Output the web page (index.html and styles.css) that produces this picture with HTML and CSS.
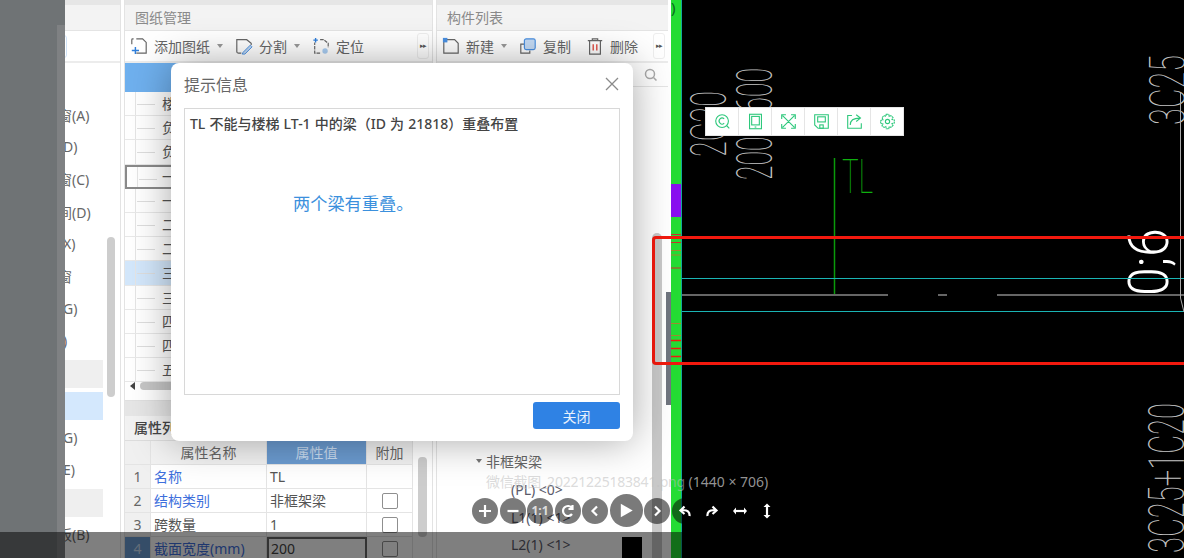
FILE: index.html
```html
<!DOCTYPE html>
<html lang="zh">
<head>
<meta charset="utf-8">
<title>提示信息</title>
<link rel="stylesheet" href="styles.css">
</head>
<body>
<div class="stage">
  <div class="gutter"><div class="gutter-strip"></div></div>

  <section class="pane pane-left">
    <div class="pane-top"></div>
    <div class="pane-head"></div>
    <div class="pane-tools"><span class="search-edge"></span></div>
    <div class="nav-list">
      <div class="nav-item">窗(A)</div>
      <div class="nav-item"><span class="clip">D)</span></div>
      <div class="nav-item">窗(C)</div>
      <div class="nav-item">间(D)</div>
      <div class="nav-item"><span class="clip">X)</span></div>
      <div class="nav-item">窗</div>
      <div class="nav-item"><span class="clip">G)</span></div>
      <div class="nav-item"><span class="clip">)</span></div>
      <div class="nav-item is-muted"></div>
      <div class="nav-item is-active"></div>
      <div class="nav-item"><span class="clip">G)</span></div>
      <div class="nav-item"><span class="clip">E)</span></div>
      <div class="nav-item is-muted"></div>
      <div class="nav-item">板(B)</div>
    </div>
    <div class="thumb thumb-left"></div>
  </section>
  <div class="split"></div>

  <div class="column">
    <section class="pane pane-drawings">
      <div class="pane-top"></div>
      <div class="pane-head">图纸管理</div>
      <div class="pane-tools">
        <span class="tool">
          <svg class="tool-icon" viewBox="0 0 20 20"><path d="M7 2h7l4 4v12H7M2 8V3a1 1 0 0 1 1-1h1" fill="none" stroke="#666" stroke-width="1.3"/><path d="M2 15h8M6 11v8" stroke="#2f7fdc" stroke-width="1.6"/></svg>添加图纸<i class="caret"></i>
        </span>
        <span class="tool">
          <svg class="tool-icon" viewBox="0 0 20 20"><path d="M7 18H4a2 2 0 0 1-2-2V3h11l5 4v2" fill="none" stroke="#666" stroke-width="1.3"/><path d="M9 17l8-8 2 2-8 8H8z" fill="#bcd6f3" stroke="#4a90e2"/></svg>分割<i class="caret"></i>
        </span>
        <span class="tool">
          <svg class="tool-icon" viewBox="0 0 20 20"><path d="M9 3h4l5 4v5M9 18H3V6" fill="none" stroke="#666" stroke-width="1.3" stroke-dasharray="4 1"/><path d="M4 1v5M1.500 3.500h5" stroke="#2f7fdc" stroke-width="1.5"/><circle cx="14.500" cy="15.500" r="3" fill="#a9cdf2"/></svg>定位
        </span>
        <span class="more">▸▸</span>
      </div>
      <div class="tree-head"></div>
      <div class="tree">
        <div class="tree-row">楼</div>
        <div class="tree-row">负</div>
        <div class="tree-row">负</div>
        <div class="tree-row is-focus">一</div>
        <div class="tree-row">一</div>
        <div class="tree-row">二</div>
        <div class="tree-row">二</div>
        <div class="tree-row is-selected">三</div>
        <div class="tree-row">三</div>
        <div class="tree-row">四</div>
        <div class="tree-row">四</div>
        <div class="tree-row">五</div>
      </div>
      <div class="hscroll"><i class="hscroll-arrow"></i><i class="hscroll-thumb"></i></div>
    </section>

    <section class="props">
      <div class="props-band"></div>
      <div class="props-tab">属性列表</div>
      <div class="props-body">
        <div class="props-table">
          <div class="cell cell-no"></div><div class="cell cell-head">属性名称</div><div class="cell cell-head is-current">属性值</div><div class="cell cell-head">附加</div>
          <div class="cell cell-no">1</div><div class="cell link">名称</div><div class="cell">TL</div><div class="cell"></div>
          <div class="cell cell-no">2</div><div class="cell link">结构类别</div><div class="cell">非框架梁</div><div class="cell cell-check"><i class="check"></i></div>
          <div class="cell cell-no">3</div><div class="cell">跨数量</div><div class="cell">1</div><div class="cell cell-check"><i class="check"></i></div>
          <div class="cell cell-no is-current">4</div><div class="cell link">截面宽度(mm)</div><div class="cell is-editing">200</div><div class="cell cell-check"><i class="check"></i></div>
        </div>
        <div class="props-scroll"><i class="props-thumb"></i></div>
      </div>
    </section>
  </div>
  <div class="split"></div>

  <section class="pane pane-parts">
    <div class="pane-top"></div>
    <div class="pane-head">构件列表</div>
    <div class="pane-tools">
      <span class="tool">
        <svg class="tool-icon" viewBox="0 0 20 20"><path d="M2 3h12l4 4v11H2z" fill="none" stroke="#666" stroke-width="1.3"/><rect x="1" y="1" width="5" height="5" fill="#4a90e2"/></svg>新建<i class="caret"></i>
      </span>
      <span class="tool tool-plain">
        <svg class="tool-icon" viewBox="0 0 20 20"><path d="M6 8H2v10h10v-3" fill="none" stroke="#666" stroke-width="1.3"/><rect x="6" y="2" width="12" height="12" rx="2" fill="#c5dbf5" stroke="#4a90e2" stroke-width="1.3"/></svg>复制
      </span>
      <span class="tool">
        <svg class="tool-icon" viewBox="0 0 20 20"><path d="M2 4h16M7 4V2h6v2M4 4v15h12V4" fill="none" stroke="#666" stroke-width="1.3"/><path d="M8 8v7M12 8v7" stroke="#e0483e" stroke-width="1.5"/></svg>删除
      </span>
      <span class="more">▸▸</span>
    </div>
    <div class="search-row">
      <svg class="search-icon" viewBox="0 0 14 14"><circle cx="6" cy="6" r="4.500" fill="none" stroke="#aaa" stroke-width="1.500"/><path d="M9.500 9.500l3 3" stroke="#aaa" stroke-width="1.500"/></svg>
    </div>
    <div class="parts-body">
      <div class="parts-tree">
        <div class="parts-group"><i class="caret caret-dark"></i>非框架梁</div>
        <div class="parts-item">(PL) &lt;0&gt;</div>
        <div class="parts-item">L1(1) &lt;1&gt;</div>
        <div class="parts-item parts-last">L2(1) &lt;1&gt;<i class="mini-shot"></i></div>
      </div>
      <div class="parts-scroll"><i class="parts-thumb"></i></div>
      <div class="parts-edge"><i class="parts-grip"></i></div>
    </div>
  </section>

  <div class="marker">
    <span class="marker-tip">)</span>
    <i class="marker-purple"></i>
    <svg class="marker-ticks" viewBox="0 0 10 558">
      <path d="M0 234.500h10M0 242.500h10M0 268h10" stroke="#c8342a" stroke-width="1"/>
      <path d="M0 250.500h10M0 255h10M0 323.500h10M0 335.500h10" stroke="#a08a30" stroke-width="1"/>
      <path d="M0 340.500h10M0 348.500h10M0 356.500h10" stroke="#f01a10" stroke-width="1.500"/>
    </svg>
  </div>

  <div class="cad">
    <svg class="cad-art" viewBox="682 0 502 558" xmlns="http://www.w3.org/2000/svg">
      <g class="cad-thin">
        <text transform="translate(726 157) rotate(-90)" textLength="66" lengthAdjust="spacingAndGlyphs">2C20</text>
        <text transform="translate(772 180) rotate(-90)" textLength="112" lengthAdjust="spacingAndGlyphs">200@600</text>
        <text transform="translate(1185 125) rotate(-90)" textLength="70" lengthAdjust="spacingAndGlyphs">3C25</text>
        <text transform="translate(1184 553) rotate(-90)" textLength="150" lengthAdjust="spacingAndGlyphs">3C25+1C20</text>
      </g>
      <text class="cad-bold" transform="translate(1168 296) rotate(-90)" textLength="68" lengthAdjust="spacingAndGlyphs">0;6</text>
      <text class="cad-tl" transform="translate(842 193)" textLength="31" lengthAdjust="spacingAndGlyphs">TL</text>
      <path d="M834.500 158V295" stroke="#0a9a0a" stroke-width="1.500"/>
      <path d="M682 278.500H1184M682 311.500H1184" stroke="#1ab4b4" stroke-width="1"/>
      <path d="M682 295H888M938 295H947M997 295H1184" stroke="#666" stroke-width="2"/>
      <path d="M1180.500 93V298L1184 312" fill="none" stroke="#aaa" stroke-width="1"/>
    </svg>
  </div>

  <div class="cad-tools">
    <span class="cad-tool"><svg viewBox="0 0 20 20"><circle cx="9.500" cy="9.500" r="7.500"/><path d="M12 7a3.500 3.500 0 1 0 0 5M15 15l3 3"/></svg></span>
    <span class="cad-tool"><svg viewBox="0 0 20 20"><rect x="3" y="1.500" width="14" height="17"/><rect x="5.500" y="4" width="9" height="10"/><path d="M9 16.500h2"/></svg></span>
    <span class="cad-tool"><svg viewBox="0 0 20 20"><path d="M3 3l14 14M17 3L3 17M2 7V2h5M13 2h5v5M18 13v5h-5M7 18H2v-5"/></svg></span>
    <span class="cad-tool"><svg viewBox="0 0 20 20"><path d="M2 2h16v16H6l-4-4z"/><rect x="5.500" y="4.500" width="9" height="6"/><rect x="8" y="14" width="4" height="4"/></svg></span>
    <span class="cad-tool"><svg viewBox="0 0 20 20"><path d="M7 3H2v15h16v-6M5 14c0-5 4-8 11-8M12 2l5 4-5 4"/></svg></span>
    <span class="cad-tool"><svg viewBox="0 0 20 20"><circle cx="10" cy="10" r="2.500"/><path d="M8.500 1.500h3l.5 2.500 2-1 2.500 2.500-1.200 2 2.700.7v3.600l-2.700.7 1.200 2-2.500 2.500-2-1-.5 2.500h-3l-.5-2.500-2 1L3.500 15l1.200-2L2 12.300V8.700L4.700 8 3.500 5.500 6 3l2 1z" stroke-dasharray="2.500 .6"/></svg></span>
  </div>

  <div class="red-box"></div>

  <div class="viewer-caption"><span class="caption-name">微信截图_20221225183841.png</span> (1440 × 706)</div>
  <div class="viewer-bar">
    <span class="vbtn"><svg viewBox="0 0 26 26"><path d="M7 13h12M13 7v12"/></svg></span>
    <span class="vbtn"><svg viewBox="0 0 26 26"><path d="M7.500 13h11"/></svg></span>
    <span class="vbtn vbtn-text">1:1</span>
    <span class="vbtn"><svg viewBox="0 0 26 26"><path d="M17 10a5 5 0 1 0 0 6M17.500 7v4h-4"/></svg></span>
    <span class="vbtn"><svg viewBox="0 0 26 26"><path d="M15 8.500L10.500 13l4.500 4.500"/></svg></span>
    <span class="vbtn vbtn-play"><svg viewBox="0 0 32 32"><path class="fill" d="M10.500 9.500L22 16l-11.500 6.500z"/></svg></span>
    <span class="vbtn"><svg viewBox="0 0 26 26"><path d="M11 8.500l4.500 4.500L11 17.500"/></svg></span>
    <span class="vbtn vbtn-plain"><svg viewBox="0 0 26 26"><path d="M17.500 18c.5-4-2-6.500-8-5.500M12.500 8.500l-4 4 4 3.500"/></svg></span>
    <span class="vbtn vbtn-plain"><svg viewBox="0 0 26 26"><path d="M8.500 18c-.5-4 2-6.500 8-5.500M13.500 8.500l4 4-4 3.500"/></svg></span>
    <span class="vbtn vbtn-plain"><svg viewBox="0 0 26 26"><path d="M9 13h8"/><path class="fill" d="M9 9.500v7L6 13zM17 9.500v7l3-3.500z"/></svg></span>
    <span class="vbtn vbtn-plain"><svg viewBox="0 0 26 26"><path d="M13 9v8"/><path class="fill" d="M9.500 9h7L13 5.500zM9.500 17h7L13 20.500z"/></svg></span>
  </div>
  <div class="viewer-dim"></div>

  <div class="dialog">
    <div class="dialog-head">
      <span>提示信息</span>
      <svg class="dialog-close" viewBox="0 0 14 14"><path d="M1 1l12 12M13 1L1 13"/></svg>
    </div>
    <div class="dialog-box">
      <p class="dialog-msg">TL 不能与楼梯 LT-1 中的梁（ID 为 21818）重叠布置</p>
      <p class="dialog-note">两个梁有重叠。</p>
    </div>
    <div class="dialog-foot"><button class="dialog-btn">关闭</button></div>
  </div>
</div>
</body>
</html>
```
FILE: styles.css
```css
* { box-sizing: border-box; }
html, body { margin: 0; padding: 0; background: #000; }
body { font-family: "Noto Sans", "Noto Sans CJK SC", sans-serif; color: #555; }
p { margin: 0; }
i { display: block; font-style: normal; }

.stage { position: relative; display: flex; width: 1184px; height: 558px; overflow: hidden; background: #fff; }

.gutter { flex: 0 0 65px; background: #6f7375; position: relative; display: flex; justify-content: flex-end; align-items: flex-end; }
.gutter-strip { width: 8px; height: 533px; background: #7f8183; }

.split { flex: 0 0 5px; background: #fff; border-left: 1px solid #e3e3e3; border-right: 1px solid #e3e3e3; }

.pane { display: flex; flex-direction: column; background: #fff; }
.pane-left { flex: 0 0 55px; position: relative; overflow: hidden; }
.pane-top { height: 5px; flex: none; background: #e6e6e6; }
.pane-head { height: 26px; flex: none; padding: 3px 0 0 10px; background: #f3f3f3; border-bottom: 1px solid #e4e4e4; font-size: 14px; line-height: 20px; color: #8a8a8a; }
.pane-tools { height: 32px; flex: none; display: flex; align-items: center; position: relative; border-bottom: 2px solid #ececec; padding-left: 5px; font-size: 14px; color: #666; white-space: nowrap; }
.search-edge { position: absolute; left: -8px; top: 4px; width: 10px; height: 23px; border: 1px solid #cfe2f7; border-radius: 3px; }

.nav-list { display: flex; flex-direction: column; padding-top: 37px; }
.nav-item { height: 32.300px; display: flex; align-items: center; margin-right: 17px; margin-left: -7px; font-size: 14px; color: #666; white-space: nowrap; padding-bottom: 3px; }
.clip { padding-left: 5px; }
.is-muted { background: #efefef; height: 28px; margin: 2px 17px 2px 0; }
.is-active { background: #d4e8fd; height: 28px; margin: 2px 17px 2px 0; }
.thumb-left { position: absolute; left: 42px; top: 237px; width: 8px; height: 160px; background: #cdcdcd; border-radius: 4px; }

.column { flex: 0 0 307px; display: flex; flex-direction: column; }
.pane-drawings { height: 401px; flex: none; border-bottom: 1px solid #e0e0e0; }
.tool { display: inline-flex; align-items: center; margin-right: 12px; }
.tool-plain { margin-right: 15px; }
.tool-icon { width: 18px; height: 18px; margin-right: 6px; flex: none; }
.caret { width: 0; height: 0; margin-left: 7px; border: 3px solid transparent; border-top: 4px solid #999; border-bottom: 0; }
.caret-dark { margin: 0 4px 0 0; border-top-color: #777; }
.more { margin-left: auto; margin-right: 3px; width: 12px; height: 26px; border: 1px solid #eee; border-radius: 3px; font-size: 7px; line-height: 24px; color: #555; letter-spacing: -1px; text-align: center; }
.tree-head { height: 29px; flex: none; background: #6fb0ee; }
.tree { display: flex; flex-direction: column; flex: none; }
.tree-row { height: 24.200px; flex: none; padding-left: 37px; font-size: 14px; line-height: 24px; color: #555; border-bottom: 1px solid #e8e8e8; position: relative; }
.tree-row::before { content: ""; position: absolute; left: 10px; top: 0; bottom: 0; border-left: 1px solid #e5e5e5; }
.tree-row::after { content: ""; position: absolute; left: 12px; top: 12px; width: 18px; border-top: 1px solid #dedede; }
.is-focus { border: 2px solid #8a8a8a; padding-left: 35px; line-height: 20px; }
.is-selected { background: #d3e7fb; }
.hscroll { flex: 1; display: flex; align-items: center; padding: 0 0 10px 5px; background: #fff; }
.hscroll-arrow { width: 0; height: 0; border: 4px solid transparent; border-right: 5px solid #444; border-left: 0; }
.hscroll-thumb { width: 60px; height: 8px; margin-left: 5px; background: #c6c6c6; border-radius: 4px; }

.props { flex: 1; min-height: 0; display: flex; flex-direction: column; }
.props-band { height: 15px; flex: none; background: #e6e6e6; }
.props-tab { height: 25px; flex: none; padding: 1px 0 0 9px; background: #f2f2f2; border-bottom: 1px solid #ddd; font-size: 14px; line-height: 22px; font-weight: 500; color: #444; }
.props-body { flex: 1; display: flex; min-height: 0; }
.props-table { width: 288px; flex: none; display: grid; grid-template-columns: 26px 116px 100px 46px; grid-auto-rows: 24px; align-content: start; }
.cell { padding-left: 3px; font-size: 14px; line-height: 23px; color: #555; border-right: 1px solid #e4e4e4; border-bottom: 1px solid #e4e4e4; white-space: nowrap; overflow: hidden; }
.cell-no { padding: 0; background: #f0f0f0; text-align: center; color: #666; }
.cell-head { padding: 0; text-align: center; background: #f2f2f2; color: #666; }
.cell-check { display: flex; align-items: center; justify-content: center; padding: 0; }
.check { width: 16px; height: 16px; border: 1px solid #8f8f8f; border-radius: 2px; background: #fff; }
.cell.is-current { background: #6b9bd0; color: #c9dcf1; }
.link { color: #3e6fdc; }
.is-editing { border: 2px solid #666; line-height: 20px; padding-left: 2px; color: #444; }
.props-scroll { flex: 1; padding: 16px 4px 0 5px; }
.props-thumb { width: 9px; height: 80px; background: #cdcdcd; border-radius: 4px; }

.pane-parts { flex: 0 0 234px; padding-right: 3px; }
.pane-parts .pane-head { padding-left: 10px; }
.search-row { height: 24px; flex: none; display: flex; justify-content: flex-end; align-items: center; padding-right: 10px; border-bottom: 1px solid #e5e5e5; }
.search-icon { width: 14px; height: 14px; }
.parts-body { flex: 1; min-height: 0; display: flex; }
.parts-tree { flex: 0 0 215px; padding: 362px 0 0 39px; font-size: 14px; color: #666; }
.parts-group { display: flex; align-items: center; height: 24px; }
.parts-item { height: 27.500px; padding-left: 35px; line-height: 27px; white-space: nowrap; position: relative; color: #5a5a6a; }
.parts-group + .parts-item { margin-top: 3px; }
.mini-shot { position: absolute; left: 133px; top: 2px; width: 33px; height: 26px; background: linear-gradient(#000, #000) 13px 4px / 20px 22px no-repeat, #fff; }
.parts-scroll { flex: none; width: 10px; padding-top: 146px; }
.parts-thumb { width: 10px; height: 400px; background: #c8c8c8; border-radius: 5px; }
.parts-edge { flex: none; width: 6px; position: relative; }
.parts-grip { position: absolute; right: -3px; top: 205px; width: 5px; height: 113px; background: #70757f; }

.marker { flex: 0 0 11px; position: relative; background: #24dc34; border-right: 1px solid #12a89a; }
.marker-tip { position: absolute; left: 0; top: -3px; font-size: 15px; color: #0a6a20; }
.marker-purple { position: absolute; left: 0; right: 0; top: 184px; height: 33px; background: #8a10f0; }
.marker-ticks { position: absolute; left: 0; top: 0; width: 10px; height: 558px; }

.cad { flex: 1; min-width: 0; background: #000; position: relative; }
.cad-art { display: block; width: 502px; height: 558px; }
.cad-thin text { font-family: Roboto, sans-serif; font-weight: 100; font-size: 50px; fill: #c4c4c4; }
.cad-bold { font-family: Roboto, sans-serif; font-weight: 300; font-size: 56px; fill: #fff; }
.cad-tl { font-family: Roboto, sans-serif; font-weight: 100; font-size: 49px; fill: #0fb00f; }

.cad-tools { position: absolute; left: 705px; top: 107px; display: flex; height: 29px; background: #fff; border: 1px solid #e5e5e5; }
.cad-tool { width: 33px; display: flex; align-items: center; justify-content: center; border-right: 1px solid #e5e5e5; }
.cad-tool:last-child { border-right: 0; width: 32px; }
.cad-tool svg { width: 17px; height: 17px; fill: none; stroke: #2ec87c; stroke-width: 1.300; }

.red-box { position: absolute; left: 652px; top: 236px; width: 560px; height: 129px; border: 3px solid #f2190e; border-radius: 4px; }

.viewer-caption { position: absolute; left: 486px; top: 472px; font-size: 14px; line-height: 20px; color: rgba(175, 175, 175, .85); white-space: nowrap; }
.caption-name { color: rgba(190, 190, 190, .55); letter-spacing: -.22px; }
.viewer-bar { position: absolute; left: 472px; top: 494px; display: flex; align-items: center; gap: 1.500px; }
.vbtn { width: 26px; height: 26px; display: flex; align-items: center; justify-content: center; flex: none; border-radius: 50%; background: rgba(0, 0, 0, .52); color: #fff; }
.vbtn svg { width: 100%; height: 100%; fill: none; stroke: #fff; stroke-width: 2.200; }
.vbtn svg .fill { fill: #fff; stroke: none; }
.vbtn-play { width: 33px; height: 33px; }
.vbtn-plain { background: none; }
.vbtn-text { font-size: 12px; font-weight: 700; color: #ddd; }
.viewer-dim { position: absolute; left: 0; bottom: 0; width: 683px; height: 26px; background: rgba(0, 0, 0, .5); }
.vbtn:nth-child(8) { background: rgba(0, 0, 0, .52); }

.dialog { position: absolute; left: 171px; top: 63px; width: 462px; height: 378px; padding: 0 13px; display: flex; flex-direction: column; background: #fff; border-radius: 8px; box-shadow: 0 0 40px rgba(0, 0, 0, .35); }
.dialog-head { height: 45px; flex: none; display: flex; align-items: center; justify-content: space-between; padding-bottom: 4px; font-size: 16px; color: #666; }
.dialog-close { width: 14px; height: 14px; margin-right: 1px; fill: none; stroke: #8a8a8a; stroke-width: 1.300; }
.dialog-box { height: 287px; flex: none; padding: 6px 5px; border: 1px solid #d8d8d8; }
.dialog-msg { font-size: 14px; line-height: 18px; font-weight: 500; color: #444; word-spacing: .5px; white-space: nowrap; }
.dialog-note { margin: 58px 0 0 103px; font-size: 17.200px; line-height: 26px; color: #3b90dd; }
.dialog-foot { display: flex; justify-content: flex-end; padding-top: 7px; }
.dialog-btn { width: 87px; height: 27px; padding: 0; border: 0; border-radius: 3px; background: #2f82e4; color: #e8f1fc; font: 14px "Noto Sans CJK SC", sans-serif; }
```
